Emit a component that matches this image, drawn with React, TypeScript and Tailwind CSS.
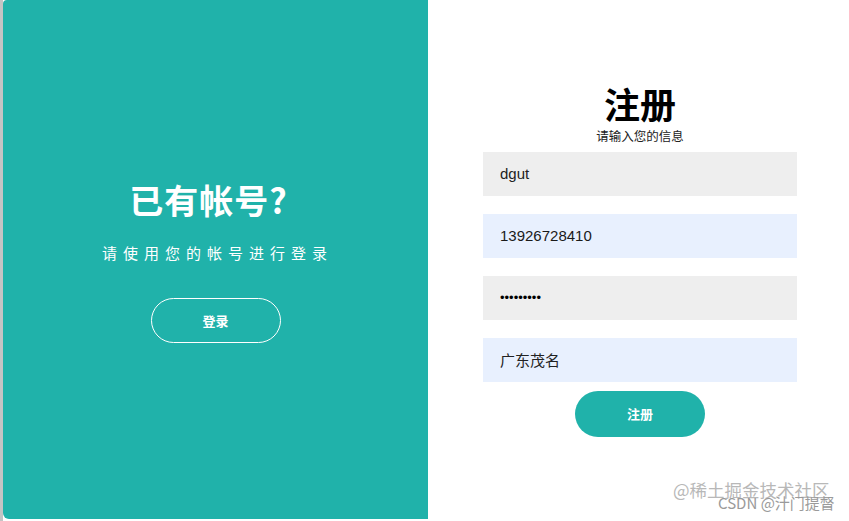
import React from "react";

const font = "font-['Microsoft_YaHei','Noto_Sans_CJK_SC',sans-serif]";

export default function App() {
  return (
    <div className={`w-[849px] h-[521px] bg-white flex relative overflow-hidden ${font}`}>
      {/* left gray edge */}
      <div className="w-[3px] h-full bg-[#c4c4c4]" />

      {/* Left panel */}
      <div className="w-[425px] h-[519px] bg-[#20b2aa] rounded-bl-md rounded-tl-sm flex flex-col items-center justify-center text-white">
        <h1 className="text-[34px] font-bold leading-none tracking-[1px] mt-[7px] mr-[14px]">已有帐号?</h1>
        <p className="text-[15px] tracking-[6px] mt-[25px] ml-[4px]">请使用您的帐号进行登录</p>
        <button className="mt-[33px] w-[130px] h-[45px] rounded-full border border-white text-[13px] font-bold">
          登录
        </button>
      </div>

      {/* Right panel */}
      <div className="flex-1 flex flex-col items-center pt-[85px]">
        <div className="w-[314px] flex flex-col items-center ml-[3px]">
          <h2 className="text-[36px] font-bold leading-none text-black">注册</h2>
          <p className="text-[12.5px] text-[#222] leading-none mt-[9px]">请输入您的信息</p>
          <div className="w-full flex flex-col gap-[18px] mt-[9px]">
            <input
              readOnly
              value="dgut"
              className="w-full h-[44px] bg-[#eeeeee] px-[17px] text-[15px] text-[#222] outline-none font-['Liberation_Sans',sans-serif]"
            />
            <input
              readOnly
              value="13926728410"
              className="w-full h-[44px] bg-[#e8f0fe] px-[17px] text-[15px] text-[#1a1a1a] outline-none font-['Liberation_Sans',sans-serif]"
            />
            <input
              readOnly
              type="password"
              value="123456789"
              className="w-full h-[44px] bg-[#eeeeee] px-[17px] text-[13px] text-black outline-none font-['Liberation_Sans',sans-serif]"
            />
            <input
              readOnly
              value="广东茂名"
              className={`w-full h-[44px] bg-[#e8f0fe] px-[17px] text-[15px] text-[#222] outline-none ${font}`}
            />
          </div>
          <button className="mt-[9px] w-[130px] h-[46px] rounded-full bg-[#20b2aa] text-white text-[13px] font-bold">
            注册
          </button>
        </div>
      </div>

      {/* watermark */}
      <div className="absolute left-[673px] top-[481px] text-[17.5px] text-[#b8b8b8] leading-none whitespace-nowrap">
        @稀土掘金技术社区
      </div>
      <div className="absolute left-[718px] top-[495px] text-[15px] text-[#9a9a9a] leading-none whitespace-nowrap">
        CSDN @汁门提督
      </div>
    </div>
  );
}
